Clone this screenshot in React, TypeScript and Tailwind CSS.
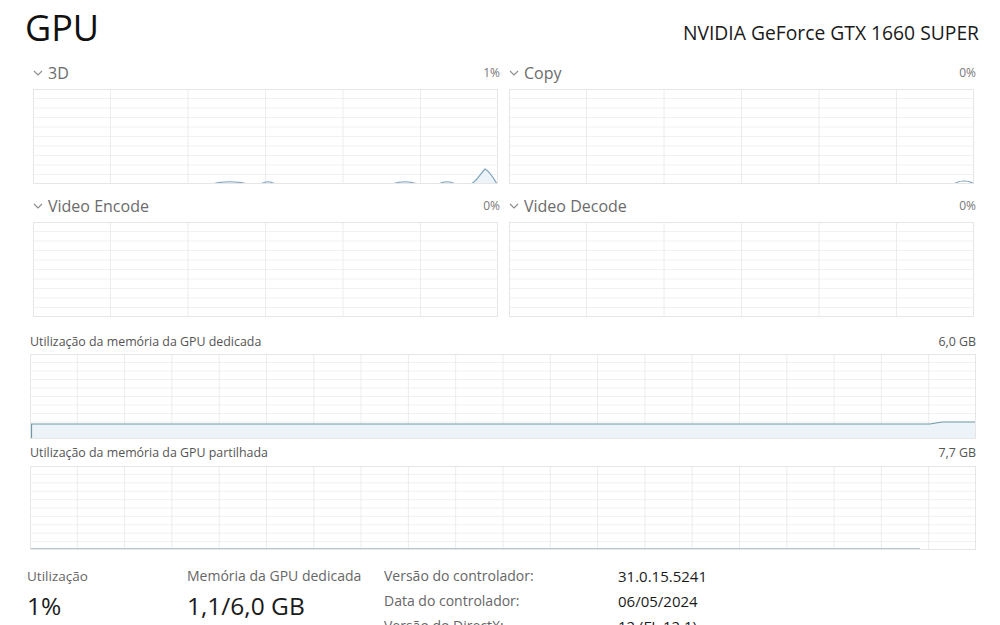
import React from 'react'

const font = { fontFamily: '"Open Sans", "Noto Sans", Arial, sans-serif' }

interface GraphProps {
  width: number
  height: number
  cols: number
  rows: number
  line?: string
  fill?: string
  stroke?: string
}

const Graph = ({ width, height, cols, rows, line, fill, stroke = '#7fa3bd' }: GraphProps) => {
  const vLines = Array.from({ length: cols - 1 }, (_, i) => ((i + 1) * width) / cols)
  const hLines = Array.from({ length: rows - 1 }, (_, i) => ((i + 1) * height) / rows)
  return (
    <div className="border border-[#e6e6e6]" style={{ width, height }}>
      <svg width={width - 2} height={height - 2} className="block" viewBox={`1 1 ${width - 2} ${height - 2}`} preserveAspectRatio="none">
        {hLines.map((y) => (
          <line key={'h' + y} x1={0} x2={width} y1={y} y2={y} stroke="#f1f1f1" strokeWidth={1} />
        ))}
        {vLines.map((x) => (
          <line key={'v' + x} x1={x} x2={x} y1={0} y2={height} stroke="#ececec" strokeWidth={1} />
        ))}
        {fill && <path d={fill} fill="#edf4f9" />}
        {line && <path d={line} fill="none" stroke={stroke} strokeWidth={1.2} />}
      </svg>
    </div>
  )
}

const Chevron = () => (
  <svg width="10" height="6" viewBox="0 0 10 6" className="mr-[5px]">
    <polyline points="1,1 5,5 9,1" fill="none" stroke="#8a8a8a" strokeWidth="1.1" />
  </svg>
)

const EngineGraph = ({ title, value, line, fill }: { title: string; value: string; line?: string; fill?: string }) => (
  <div className="w-[465px]">
    <div className="flex h-[24px] items-center justify-between">
      <div className="flex items-center text-[16px] text-[#6b6b6b]">
        <Chevron />
        {title}
      </div>
      <span className="-mr-[2px] text-[12px] text-[#777]">{value}</span>
    </div>
    <div className="mt-[4px]">
      <Graph width={465} height={95} cols={6} rows={10} line={line} fill={fill} />
    </div>
  </div>
)

// baseline sits on the bottom border, only the bumps show
const threeDLine =
  'M0,95 L180,95 C188,92 205,92 214,95 L228,95 C232,92 238,92 242,95 L360,95 C366,92 378,92 384,95 L406,95 C410,92 418,92 422,95 L438,95 C444,92 448,84 452,80 C456,82 460,88 464,95'
const copyLine = 'M0,95 L445,95 C450,91 460,91 465,95'

export default function App() {
  return (
    <div className="h-[625px] w-[1000px] overflow-hidden bg-white" style={font}>
      <div className="flex items-start justify-between pl-[25px] pr-[21px] pt-[5px]">
        <h1 className="text-[36px] leading-[46px] text-[#111]">GPU</h1>
        <div className="pt-[16px] text-[19.3px] leading-[24px] text-[#1a1a1a]">NVIDIA GeForce GTX 1660 SUPER</div>
      </div>

      <div className="ml-[33px] mt-[10px] grid w-[941px] grid-cols-2 gap-x-[11px] gap-y-[10px]">
        <EngineGraph title="3D" value="1%" line={threeDLine} fill={threeDLine + ' L465,96 L0,96 Z'} />
        <EngineGraph title="Copy" value="0%" line={copyLine} />
        <EngineGraph title="Video Encode" value="0%" />
        <EngineGraph title="Video Decode" value="0%" />
      </div>

      <div className="ml-[30px] mt-[16px] w-[946px]">
        <div className="flex justify-between text-[12.4px] leading-[18px] text-[#555]">
          <span>Utilização da memória da GPU dedicada</span>
          <span>6,0 GB</span>
        </div>
        <div className="mt-[3px]">
          <Graph
            width={946}
            height={85}
            cols={20}
            rows={10}
            stroke="#6e9aa6"
            line="M1.5,84 L1.5,70 L900,70 L912,68 L946,68"
            fill="M1.5,70 L900,70 L912,68 L946,68 L946,85 L1,85 Z"
          />
        </div>

        <div className="mt-[5px] flex justify-between text-[12.4px] leading-[18px] text-[#555]">
          <span>Utilização da memória da GPU partilhada</span>
          <span>7,7 GB</span>
        </div>
        <div className="mt-[4px]">
          <Graph width={946} height={84} cols={20} rows={10} stroke="#6e9aa6" line="M0,83 L890,83" />
        </div>
      </div>

      <div className="mt-[17px] flex pl-[27px]">
        <div className="w-[160px]">
          <div className="text-[13.5px] leading-[18px] text-[#666]">Utilização</div>
          <div className="mt-[6px] text-[24.5px] leading-[30px] text-[#1a1a1a]">1%</div>
        </div>
        <div className="w-[197px]">
          <div className="text-[14px] leading-[18px] text-[#666]">Memória da GPU dedicada</div>
          <div className="mt-[6px] text-[24.5px] leading-[30px] text-[#1a1a1a]">1,1/6,0 GB</div>
        </div>
        <div className="grid grid-cols-[234px_auto] gap-y-[7px] leading-[18px]">
          <span className="text-[14px] text-[#666]">Versão do controlador:</span>
          <span className="text-[15px] text-[#1a1a1a]">31.0.15.5241</span>
          <span className="text-[14px] text-[#666]">Data do controlador:</span>
          <span className="text-[15px] text-[#1a1a1a]">06/05/2024</span>
          <span className="text-[14px] text-[#666]">Versão do DirectX:</span>
          <span className="text-[15px] text-[#1a1a1a]">12 (FL 12.1)</span>
        </div>
      </div>
    </div>
  )
}
